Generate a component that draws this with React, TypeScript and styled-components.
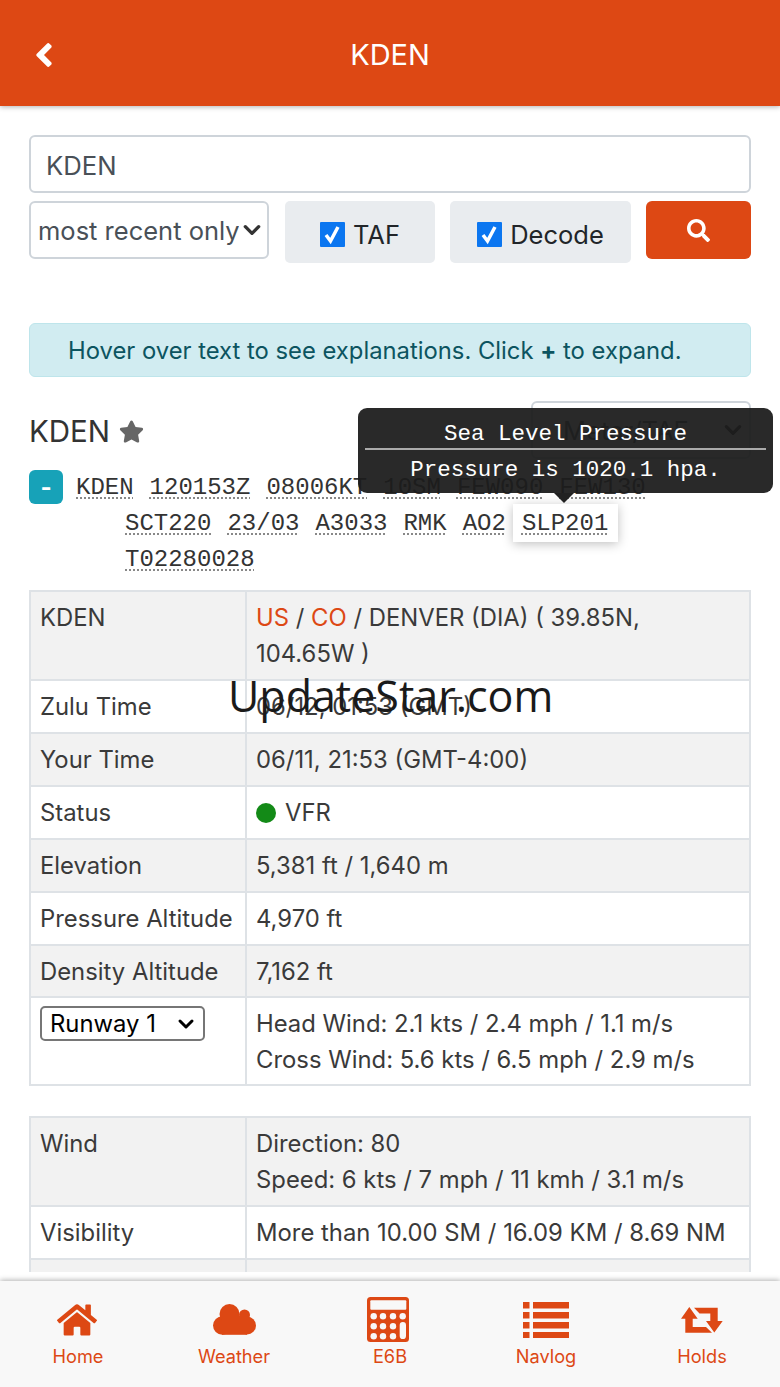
import * as React from 'react';
import styled, { createGlobalStyle } from 'styled-components';
import { FaAngleLeft, FaHome, FaSearch, FaStar } from 'react-icons/fa';

const ORANGE = '#dd4814';
const SANS = 'Inter, "Liberation Sans", Arial, sans-serif';
const MONO = '"Liberation Mono", "Courier New", monospace';

const GlobalStyle = createGlobalStyle`
    html, body {
        margin: 0;
        padding: 0;
        background: #fff;
    }
    * {
        box-sizing: border-box;
    }
`;

const Page = styled.div`
    position: relative;
    width: 780px;
    height: 1387px;
    display: flex;
    flex-direction: column;
    overflow: hidden;
    font-family: ${SANS};
    color: #333;
`;

const Header = styled.header`
    position: relative;
    z-index: 2;
    flex: 0 0 106px;
    display: flex;
    align-items: center;
    justify-content: center;
    padding-top: 2px;
    background: ${ORANGE};
    box-shadow: 0 1px 5px rgba(0, 0, 0, 0.3);
    color: #fff;
    font-size: 29px;
`;

const BackLink = styled.span`
    position: absolute;
    left: 25px;
    top: 36px;
    display: flex;
    font-size: 38px;
`;

const Main = styled.main`
    position: relative;
    flex: 1;
    min-height: 0;
    margin-bottom: 9px;
    overflow: hidden;
    padding: 29px 29px 0;
`;

const SearchInput = styled.div`
    height: 58px;
    display: flex;
    align-items: center;
    padding: 2px 15px 0;
    border: 2px solid #ced4da;
    border-radius: 6px;
    color: #495057;
    font-size: 25.7px;
`;

const FilterRow = styled.div`
    display: flex;
    align-items: flex-start;
    margin-top: 8px;
`;

const RecentSelect = styled.div`
    width: 240px;
    height: 58px;
    display: flex;
    align-items: center;
    justify-content: space-between;
    padding: 0 5px 0 7px;
    border: 2px solid #ced4da;
    border-radius: 6px;
    color: #495057;
    font-size: 25.5px;
    white-space: nowrap;
`;

const RecentText = styled.span`
    width: 201px;
    overflow: hidden;
`;

const CheckBox = styled.label<{ $width: number; $left: number }>`
    width: ${(p) => p.$width}px;
    height: 62px;
    margin-left: ${(p) => p.$left}px;
    display: flex;
    align-items: center;
    justify-content: center;
    gap: 8px;
    padding-top: 5px;
    background: #e9ecef;
    border-radius: 5px;
    color: #212529;
    font-size: 25.5px;
`;

const CheckMark = styled.span`
    width: 25px;
    height: 25px;
    display: flex;
    background: #0b76f0;
    border-radius: 1px;
`;

const SearchButton = styled.button`
    width: 105px;
    height: 58px;
    margin-left: 15px;
    display: flex;
    align-items: center;
    justify-content: center;
    padding: 0;
    border: 0;
    border-radius: 6px;
    background: ${ORANGE};
    color: #fff;
    font-size: 23px;
`;

const InfoAlert = styled.div`
    height: 54px;
    margin-top: 60px;
    display: flex;
    align-items: center;
    padding-left: 38px;
    background: #d1ecf1;
    border: 1px solid #bee5eb;
    border-radius: 6px;
    color: #0c5460;
    font-size: 23.8px;
    white-space: nowrap;
`;

const StationRow = styled.div`
    height: 60px;
    margin-top: 24px;
    display: flex;
    align-items: flex-start;
    justify-content: space-between;
`;

const StationTitle = styled.h2`
    margin: 12px 0 0;
    display: flex;
    align-items: center;
    gap: 9px;
    font-size: 29.5px;
    font-weight: 400;
    color: #333;
`;

const StarIcon = styled.span`
    display: flex;
    color: #666;
    font-size: 25px;
`;

const TypeSelect = styled.div`
    width: 220px;
    height: 58px;
    display: flex;
    align-items: center;
    justify-content: space-between;
    padding: 0 6px 0 30px;
    border: 2px solid #ced4da;
    border-radius: 6px;
    color: #495057;
    font-size: 25.5px;
`;

const MetarBlock = styled.div`
    display: flex;
    align-items: flex-start;
    margin-top: 9px;
    height: 120px;
`;

const CollapseButton = styled.span`
    flex: 0 0 34px;
    height: 34px;
    display: flex;
    align-items: center;
    justify-content: center;
    background: #17a2b8;
    border-radius: 6px;
    color: #fff;
    font-size: 24px;
    font-weight: 700;
`;

const MetarText = styled.div`
    flex: 1;
    margin: 0 0 0 13px;
    padding: 0 0 0 49px;
    text-indent: -49px;
    font-family: ${MONO};
    font-size: 24px;
    line-height: 36px;
    color: #333;
`;

const MetarCode = styled.span<{ $active?: boolean }>`
    position: relative;
    z-index: ${(p) => (p.$active ? 1 : 0)};
    display: inline-block;
    text-indent: 0;
    margin-right: 16px;
    line-height: 23px;
    text-decoration: underline dotted #888 2px;
    text-underline-offset: 3px;
    ${(p) =>
        p.$active
            ? `
        padding: 8px 10px 7px 9px;
        margin: -8px 6px -7px -9px;
        background: #fff;
        box-shadow: 0 2px 10px rgba(0, 0, 0, 0.25);
    `
            : ''}
`;

const MetarTooltip = styled.div`
    position: absolute;
    z-index: 3;
    left: 358px;
    top: 302px;
    width: 415px;
    height: 85px;
    padding: 13px 7px 0;
    background: rgba(28, 28, 28, 0.94);
    border-radius: 9px;
    color: #fff;
    font-family: ${MONO};
    font-size: 22.5px;
    text-align: center;

    &::after {
        content: '';
        position: absolute;
        left: 196px;
        bottom: -10px;
        border-left: 10px solid transparent;
        border-right: 10px solid transparent;
        border-top: 10px solid #222;
    }
`;

const TooltipTitle = styled.div`
    height: 29px;
    padding-bottom: 4px;
    border-bottom: 2px solid #aaa;
`;

const TooltipBody = styled.div`
    margin-top: 7px;
`;

const DataTable = styled.table`
    width: 722px;
    margin-bottom: 30px;
    border-collapse: collapse;
    table-layout: fixed;
    font-size: 23.85px;
    color: #3a3a3a;
`;

const DataRow = styled.tr<{ $striped?: boolean; $tight?: boolean }>`
    background: ${(p) => (p.$striped ? '#f2f2f2' : '#fff')};

    & > td {
        padding-bottom: ${(p) => (p.$tight ? 6 : 7)}px;
    }
`;

const LabelCell = styled.td`
    width: 216px;
    padding: 8px 9px 7px;
    border: 2px solid #dee2e6;
    line-height: 36px;
    vertical-align: top;
    white-space: nowrap;
`;

const ValueCell = styled(LabelCell)`
    width: auto;
    white-space: normal;
`;

const CountryLink = styled.span`
    color: ${ORANGE};
`;

const StatusDot = styled.span`
    display: inline-block;
    width: 20px;
    height: 20px;
    margin: 0 9px 0 0;
    vertical-align: -2px;
    border-radius: 50%;
    background: #138a17;
`;

const RunwaySelect = styled.div`
    width: 165px;
    height: 35px;
    display: flex;
    align-items: center;
    justify-content: space-between;
    padding: 0 8px;
    border: 2px solid #767676;
    border-radius: 5px;
    color: #000;
    background: #fff;
`;

const Watermark = styled.div`
    position: absolute;
    z-index: 1;
    left: 228px;
    top: 667px;
    font-family: "Open Sans", sans-serif;
    font-size: 43px;
    line-height: 58px;
    color: #1a1a1a;
    white-space: nowrap;
`;

const Footer = styled.nav`
    position: relative;
    z-index: 2;
    flex: 0 0 106px;
    display: grid;
    grid-template-columns: repeat(5, 1fr);
    background: #f8f8f8;
    box-shadow: 0 -1px 5px rgba(0, 0, 0, 0.3);
`;

const FooterItem = styled.a`
    display: flex;
    flex-direction: column;
    align-items: center;
    color: ${ORANGE};
    font-size: 18.2px;
`;

const FooterIcon = styled.span<{ $shift?: number }>`
    height: 51px;
    margin-top: 13px;
    margin-right: ${(p) => p.$shift ?? 0}px;
    display: flex;
    align-items: center;
    justify-content: center;
`;

const ChevronDown: React.FC<{ size?: number; color?: string }> = ({ size = 20, color = '#333' }) => (
    <svg width={size} height={size} viewBox="0 0 18 18" fill="none" stroke={color} strokeWidth="3" strokeLinecap="round" strokeLinejoin="round">
        <path d="M3 6l6 6 6-6" />
    </svg>
);

const CheckTick = () => (
    <svg width="25" height="25" viewBox="0 0 25 25" fill="none" stroke="#fff" strokeWidth="3.5">
        <path d="M6 13l4.5 6L18 5" />
    </svg>
);

const CloudIcon = () => (
    <svg width="43" height="31" viewBox="0 0 43 31" fill={ORANGE}>
        <circle cx="9.3" cy="21.5" r="9.3" />
        <circle cx="16.5" cy="10" r="10" />
        <circle cx="31.5" cy="11" r="5.5" />
        <circle cx="34" cy="21.5" r="9" />
        <rect x="9" y="12" width="25" height="18.8" />
    </svg>
);

const CalculatorIcon = () => {
    const keys: React.ReactNode[] = [];
    [19.3, 29.3, 39.3].forEach((cy) =>
        [6.7, 16, 26, 35.7].forEach((cx) => {
            if (cx === 35.7 && cy > 20) return;
            keys.push(<circle key={`${cy}-${cx}`} cx={cx} cy={cy} r={3.2} fill="#f8f8f8" />);
        })
    );
    return (
        <svg width="42" height="45" viewBox="0 0 42 45" fill={ORANGE}>
            <rect x="0" y="0" width="42" height="45" rx="3.5" />
            <rect x="3.3" y="3.3" width="36" height="9.4" rx="1" fill="#f8f8f8" />
            {keys}
            <rect x="32.7" y="25" width="6.3" height="17" rx="3.1" fill="#f8f8f8" />
        </svg>
    );
};

const NavlogIcon = () => (
    <svg width="46" height="36" viewBox="0 0 46 36" fill={ORANGE}>
        {[0, 10, 20, 30].map((y) => (
            <React.Fragment key={y}>
                <rect x="0" y={y} width="6.5" height="6.5" />
                <rect x="10" y={y} width="36" height="6.5" />
            </React.Fragment>
        ))}
    </svg>
);

const HoldsIcon = () => (
    <svg width="42" height="26" viewBox="0 0 42 26" fill={ORANGE}>
        <path d="M8.3 0L16.7 11.7H11.7V20H25L31 25.7H4.3V11.7H0Z" />
        <path d="M13 .7H36.7V14H41.7L33.3 25.5L25 14H29.3V6.5H18.5Z" />
    </svg>
);

const metarCodes = [
    'KDEN',
    '120153Z',
    '08006KT',
    '10SM',
    'FEW090',
    'FEW130',
    'SCT220',
    '23/03',
    'A3033',
    'RMK',
    'AO2',
    'SLP201',
    'T02280028',
];

const altitudeRows = [
    ['Elevation', '5,381 ft / 1,640 m', true],
    ['Pressure Altitude', '4,970 ft', false],
] as const;

const navItems: { label: string; icon: React.ReactNode; shift?: number }[] = [
    { label: 'Home', icon: <FaHome size={40} />, shift: 2 },
    { label: 'Weather', icon: <CloudIcon /> },
    { label: 'E6B', icon: <CalculatorIcon />, shift: 4 },
    { label: 'Navlog', icon: <NavlogIcon /> },
    { label: 'Holds', icon: <HoldsIcon /> },
];

const App: React.FC = () => (
    <Page>
        <GlobalStyle />
        <Header>
            <BackLink>
                <FaAngleLeft />
            </BackLink>
            KDEN
        </Header>
        <Main>
            <SearchInput>KDEN</SearchInput>
            <FilterRow>
                <RecentSelect>
                    <RecentText>most recent only</RecentText>
                    <ChevronDown />
                </RecentSelect>
                <CheckBox $width={150} $left={16}>
                    <CheckMark>
                        <CheckTick />
                    </CheckMark>
                    TAF
                </CheckBox>
                <CheckBox $width={181} $left={15}>
                    <CheckMark>
                        <CheckTick />
                    </CheckMark>
                    Decode
                </CheckBox>
                <SearchButton>
                    <FaSearch />
                </SearchButton>
            </FilterRow>
            <InfoAlert>
                Hover over text to see explanations. Click&nbsp;<b>+</b>&nbsp;to expand.
            </InfoAlert>
            <StationRow>
                <StationTitle>
                    KDEN
                    <StarIcon>
                        <FaStar />
                    </StarIcon>
                </StationTitle>
                <TypeSelect>
                    Metar/TAF
                    <ChevronDown />
                </TypeSelect>
            </StationRow>
            <MetarBlock>
                <CollapseButton>-</CollapseButton>
                <MetarText>
                    {metarCodes.map((code) => (
                        <MetarCode key={code} $active={code === 'SLP201'}>
                            {code}
                        </MetarCode>
                    ))}
                </MetarText>
            </MetarBlock>
            <MetarTooltip>
                <TooltipTitle>Sea Level Pressure</TooltipTitle>
                <TooltipBody>Pressure is 1020.1 hpa.</TooltipBody>
            </MetarTooltip>
            <DataTable>
                <tbody>
                    <DataRow $striped>
                        <LabelCell>KDEN</LabelCell>
                        <ValueCell>
                            <CountryLink>US</CountryLink> / <CountryLink>CO</CountryLink> / DENVER (DIA) ( 39.85N, 104.65W )
                        </ValueCell>
                    </DataRow>
                    <DataRow>
                        <LabelCell>Zulu Time</LabelCell>
                        <ValueCell>06/12, 01:53 (GMT)</ValueCell>
                    </DataRow>
                    <DataRow $striped>
                        <LabelCell>Your Time</LabelCell>
                        <ValueCell>06/11, 21:53 (GMT-4:00)</ValueCell>
                    </DataRow>
                    <DataRow>
                        <LabelCell>Status</LabelCell>
                        <ValueCell>
                            <StatusDot />
                            VFR
                        </ValueCell>
                    </DataRow>
                    {altitudeRows.map(([label, value, striped]) => (
                        <DataRow key={label} $striped={striped}>
                            <LabelCell>{label}</LabelCell>
                            <ValueCell>{value}</ValueCell>
                        </DataRow>
                    ))}
                    <DataRow $striped $tight>
                        <LabelCell>Density Altitude</LabelCell>
                        <ValueCell>7,162 ft</ValueCell>
                    </DataRow>
                    <DataRow $tight>
                        <LabelCell>
                            <RunwaySelect>
                                Runway 1
                                <ChevronDown color="#000" size={18} />
                            </RunwaySelect>
                        </LabelCell>
                        <ValueCell>
                            Head Wind: 2.1 kts / 2.4 mph / 1.1 m/s
                            <br />
                            Cross Wind: 5.6 kts / 6.5 mph / 2.9 m/s
                        </ValueCell>
                    </DataRow>
                </tbody>
            </DataTable>
            <DataTable>
                <tbody>
                    <DataRow $striped>
                        <LabelCell>Wind</LabelCell>
                        <ValueCell>
                            Direction: 80
                            <br />
                            Speed: 6 kts / 7 mph / 11 kmh / 3.1 m/s
                        </ValueCell>
                    </DataRow>
                    <DataRow>
                        <LabelCell>Visibility</LabelCell>
                        <ValueCell>More than 10.00 SM / 16.09 KM / 8.69 NM</ValueCell>
                    </DataRow>
                    <DataRow $striped>
                        <LabelCell>&nbsp;</LabelCell>
                        <ValueCell>&nbsp;</ValueCell>
                    </DataRow>
                </tbody>
            </DataTable>
        </Main>
        <Watermark>UpdateStar.com</Watermark>
        <Footer>
            {navItems.map((item) => (
                <FooterItem key={item.label}>
                    <FooterIcon $shift={item.shift}>{item.icon}</FooterIcon>
                    {item.label}
                </FooterItem>
            ))}
        </Footer>
    </Page>
);

export default App;
